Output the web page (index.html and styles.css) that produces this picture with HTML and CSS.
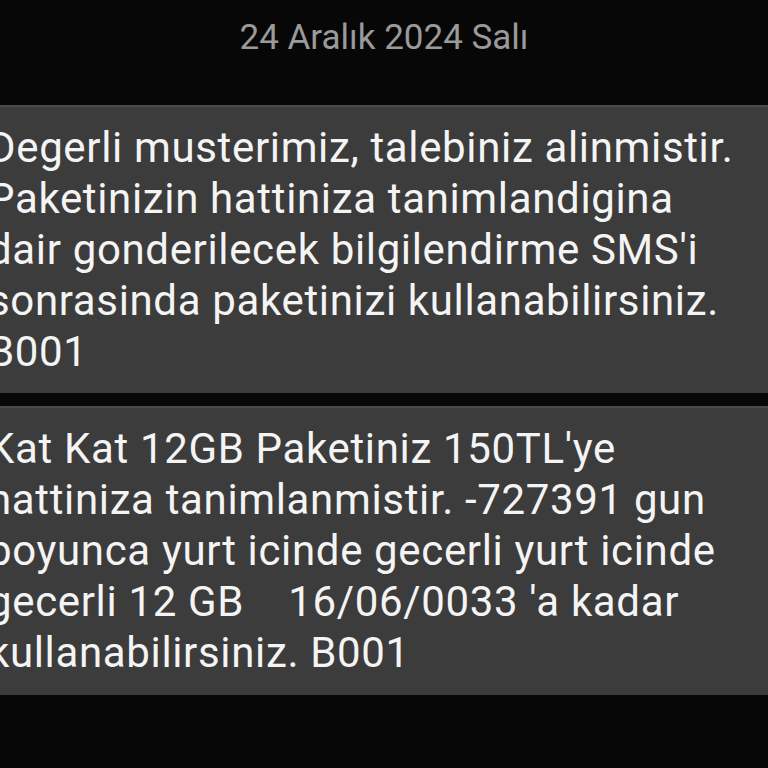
FILE: index.html
```html
<!DOCTYPE html>
<html lang="tr">
<head>
<meta charset="utf-8">
<link rel="stylesheet" href="styles.css">
</head>
<body>
<div class="screen">
  <div class="date">24 Aralık 2024 Salı</div>
  <div class="thread">
    <div class="bubble first"><div class="msg">Degerli musterimiz, talebiniz alinmistir.
Paketinizin hattiniza tanimlandigina
dair gonderilecek bilgilendirme SMS'i
sonrasinda paketinizi kullanabilirsiniz.
B001</div></div>
    <div class="bubble"><div class="msg">Kat Kat 12GB Paketiniz 150TL'ye
hattiniza tanimlanmistir. -727391 gun
boyunca yurt icinde gecerli yurt icinde
gecerli 12 GB    16/06/0033 'a kadar
kullanabilirsiniz. B001</div></div>
  </div>
</div>
</body>
</html>
```
FILE: styles.css
```css
html, body {
  margin: 0;
  padding: 0;
  background: #070707;
}
.screen {
  width: 768px;
  height: 768px;
  overflow: hidden;
  background: #070707;
  font-family: Roboto, "Noto Sans", sans-serif;
}
.date {
  height: 105px;
  box-sizing: border-box;
  padding-top: 17px;
  text-align: center;
  color: #9a9a9a;
  font-size: 35px;
  line-height: 42px;
}
.thread {
  display: flex;
  flex-direction: column;
  gap: 13px;
  margin-left: -40px;
}
.bubble {
  background: #3c3c3c;
  border-top: 2px solid #4a4a4a;
  padding: 15px 0 17px 28px;
}
.bubble.first {
  padding-bottom: 16px;
}
.msg {
  color: #f4f4f4;
  font-size: 42px;
  line-height: 51px;
  letter-spacing: 0.65px;
  white-space: pre;
}
```
